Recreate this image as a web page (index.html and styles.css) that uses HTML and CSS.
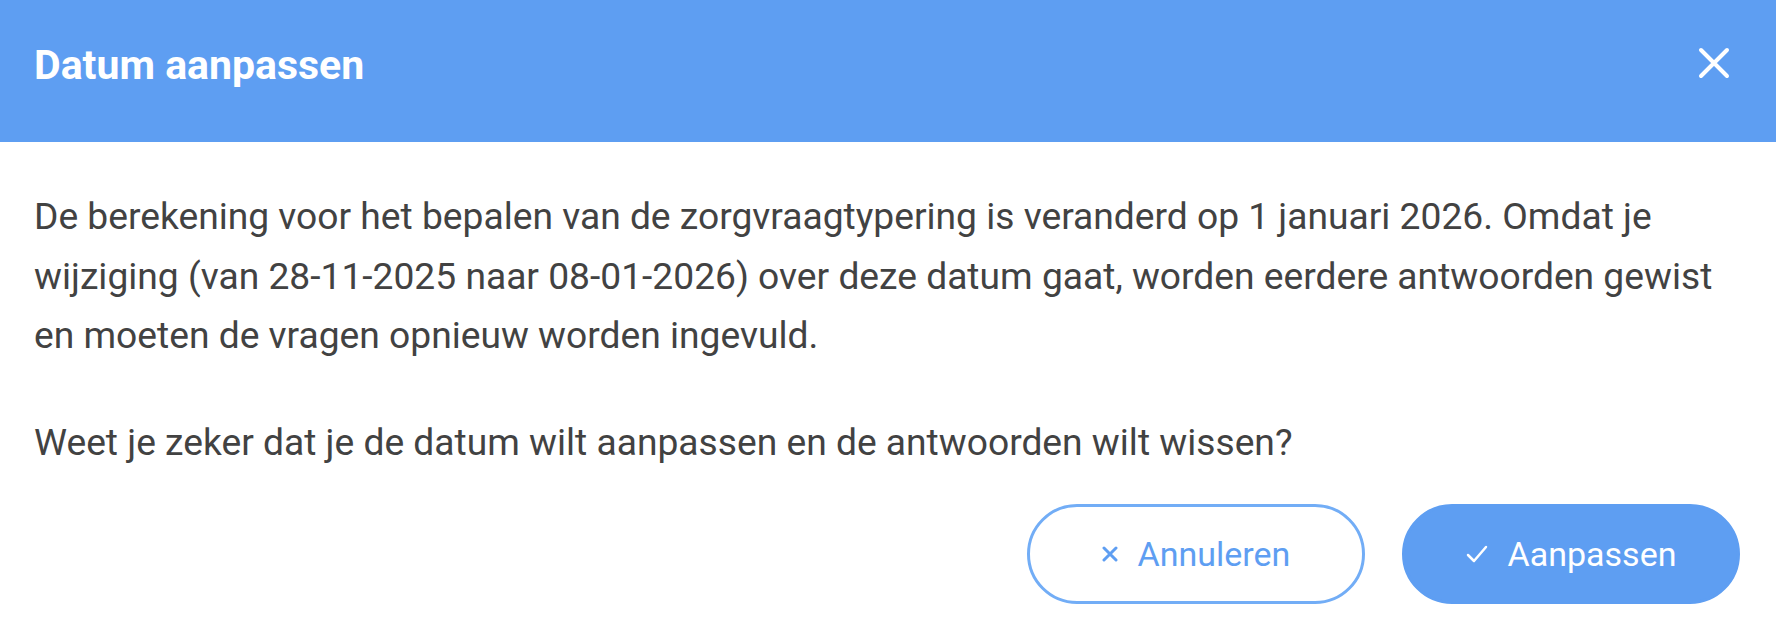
FILE: index.html
```html
<!DOCTYPE html>
<html lang="nl">
<head>
<meta charset="utf-8">
<title>Datum aanpassen</title>
<link rel="stylesheet" href="styles.css">
</head>
<body>
<div class="dialog">
  <header class="dialog-header">
    <h1 class="dialog-title">Datum aanpassen</h1>
    <button class="close-btn" aria-label="Sluiten">
      <svg viewBox="0 0 32 32" width="32" height="32"><path d="M3 3 L29 29 M29 3 L3 29" stroke="#fff" stroke-width="4" stroke-linecap="round" fill="none"/></svg>
    </button>
  </header>
  <div class="dialog-body">
    <p class="para">De berekening voor het bepalen van de zorgvraagtypering is veranderd op 1 januari 2026. Omdat je wijziging (van 28-11-2025 naar 08-01-2026) over deze datum gaat, worden eerdere antwoorden gewist en moeten de vragen opnieuw worden ingevuld.</p>
    <p class="para">Weet je zeker dat je de datum wilt aanpassen en de antwoorden wilt wissen?</p>
  </div>
  <footer class="dialog-footer">
    <button class="btn btn-outline">
      <svg class="btn-icon" viewBox="0 0 16 16" width="16" height="16"><path d="M2 2 L14 14 M14 2 L2 14" stroke="currentColor" stroke-width="3" stroke-linecap="round" fill="none"/></svg>
      <span>Annuleren</span>
    </button>
    <button class="btn btn-filled">
      <svg class="btn-icon" viewBox="0 0 22 20" width="22" height="20"><path d="M2 11 L8 17 L20 3" stroke="currentColor" stroke-width="2.5" stroke-linecap="round" stroke-linejoin="round" fill="none"/></svg>
      <span>Aanpassen</span>
    </button>
  </footer>
</div>
</body>
</html>
```
FILE: styles.css
```css
html, body {
  margin: 0;
  padding: 0;
  background: #ffffff;
}
body {
  font-family: Roboto, "Noto Sans", "Liberation Sans", sans-serif;
  width: 1776px;
  height: 632px;
  overflow: hidden;
}
.dialog {
  display: flex;
  flex-direction: column;
  width: 1776px;
}
.dialog-header {
  height: 142px;
  background: #5e9ef2;
  display: flex;
  align-items: center;
  justify-content: space-between;
  padding: 0 46px 0 34px;
  box-sizing: border-box;
}
.dialog-title {
  margin: 0;
  color: #ffffff;
  font-size: 41px;
  font-weight: 700;
  letter-spacing: 0;
  padding-bottom: 12px;
}
.close-btn {
  background: none;
  border: 0;
  padding: 0;
  width: 32px;
  height: 32px;
  display: flex;
  margin-bottom: 16px;
}
.dialog-body {
  padding: 45px 34px 0 34px;
}
.para {
  margin: 0;
  font-size: 37.2px;
  line-height: 59.5px;
  color: #424242;
}
.para + .para {
  margin-top: 47px;
}
.dialog-footer {
  display: flex;
  justify-content: flex-end;
  gap: 37px;
  padding: 32px 36px 0 0;
}
.btn {
  width: 338px;
  height: 100px;
  border-radius: 50px;
  box-sizing: border-box;
  display: flex;
  align-items: center;
  justify-content: center;
  gap: 20px;
  font-family: Roboto, "Noto Sans", sans-serif;
  font-size: 34px;
  font-weight: 400;
  cursor: pointer;
}
.btn-outline {
  background: #ffffff;
  border: 3px solid #72adf6;
  color: #5e9ef2;
}
.btn-filled {
  background: #5e9ef2;
  border: 3px solid #5e9ef2;
  color: #ffffff;
}
.btn-icon {
  flex: none;
}
```
